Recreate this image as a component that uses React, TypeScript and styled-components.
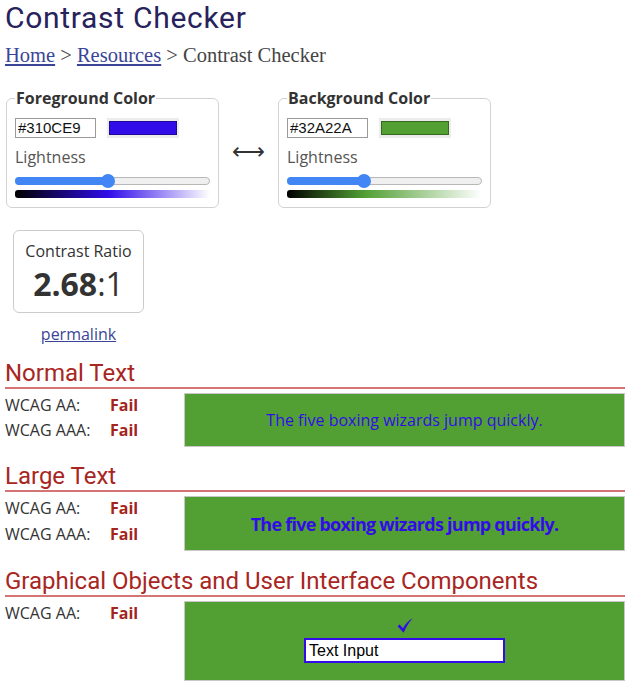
import React from 'react';
import styled, { createGlobalStyle } from 'styled-components';

const fgColor = '#310CE9';
const bgColor = '#52A034';

const GlobalStyle = createGlobalStyle`
  body {
    margin: 0;
    background: #fff;
    color: #333;
    font-family: "Open Sans", "DejaVu Sans", sans-serif;
    font-size: 16px;
  }
`;

const Page = styled.main`
  padding: 0 5px 8px;
`;

const Title = styled.h1`
  margin: 3px 0 0;
  color: #27225c;
  font-family: Roboto, sans-serif;
  font-size: 30px;
  font-weight: 400;
  letter-spacing: 0.7px;
  line-height: 1;
`;

const Crumbs = styled.nav`
  margin-top: 12px;
  color: #444;
  font-family: "Liberation Serif", serif;
  font-size: 20.5px;
  line-height: 20px;

  a {
    color: #3b4598;
  }
`;

const Pickers = styled.div`
  align-items: center;
  display: flex;
  margin-top: 23px;
  padding-left: 1px;
`;

const Picker = styled.fieldset`
  border: 1px solid #d2d2d2;
  border-radius: 6px;
  box-sizing: border-box;
  margin: 0;
  min-width: 0;
  padding: 0 8px 9px;
  width: 213px;
`;

const Legend = styled.legend`
  font-size: 16px;
  font-weight: 700;
  line-height: 21.8px;
  padding: 0 1px;
`;

const Swap = styled.div`
  font-family: "DejaVu Sans", sans-serif;
  font-size: 23px;
  padding-top: 6px;
  text-align: center;
  width: 59px;
`;

const ColorRow = styled.div`
  display: flex;
  gap: 11px;
  margin-top: 8px;
`;

const HexInput = styled.input`
  border: 1px solid #9a9a9a;
  box-sizing: border-box;
  color: #111;
  font-family: "Liberation Sans", Arial, sans-serif;
  font-size: 15px;
  height: 20px;
  margin: 0;
  padding: 0 2px;
  width: 81px;
`;

const Swatch = styled.span<{ $color: string }>`
  background: #ececec;
  box-sizing: border-box;
  display: block;
  height: 20px;
  padding: 3px 2px;
  width: 72px;

  &::after {
    background: ${({ $color }) => $color};
    border: 1px solid rgba(0, 0, 0, 0.35);
    box-sizing: border-box;
    content: '';
    display: block;
    height: 100%;
  }
`;

const Label = styled.div`
  color: #555;
  line-height: 21.8px;
  margin-top: 9px;
`;

const Track = styled.div`
  align-items: center;
  background: #efefef;
  border: 1px solid #b8b8b8;
  border-radius: 4px;
  box-sizing: border-box;
  display: flex;
  height: 8px;
  margin-top: 8px;
`;

const Fill = styled.div`
  align-self: stretch;
  background: #4285f4;
  border-radius: 4px 0 0 4px;
  margin: -1px 0 -1px -1px;
`;

const Thumb = styled.div`
  background: #4285f4;
  border-radius: 50%;
  flex: none;
  height: 14px;
  margin-left: -7px;
  width: 14px;
`;

const Ramp = styled.div<{ $color: string; $at: number }>`
  background: linear-gradient(
    to right,
    #000,
    ${({ $color }) => $color} ${({ $at }) => $at}%,
    #fff
  );
  border-radius: 3px;
  height: 8px;
  margin-top: 5px;
`;

const RatioArea = styled.div`
  align-items: center;
  display: flex;
  flex-direction: column;
  margin: 22px 0 0 8px;
  width: 131px;
`;

const RatioBox = styled.div`
  border: 1px solid #ccc;
  border-radius: 6px;
  box-sizing: border-box;
  padding: 9px 0 7px;
  text-align: center;
  width: 100%;
`;

const RatioValue = styled.div`
  font-size: 32px;

  b {
    font-weight: 700;
  }
`;

const Permalink = styled.a`
  color: #3b4598;
  margin-top: 10px;
`;

const Section = styled.section<{ $first?: boolean }>`
  margin-top: ${({ $first }) => ($first ? 16 : 17.5)}px;
`;

const SectionTitle = styled.h2`
  border-bottom: 2px solid #d47474;
  color: #a8261f;
  font-family: Roboto, sans-serif;
  font-size: 24px;
  font-weight: 400;
  line-height: 1;
  margin: 0;
  padding-bottom: 2px;
`;

const Results = styled.div`
  display: flex;
  margin-top: 4px;
`;

const Criteria = styled.dl`
  align-content: start;
  display: grid;
  grid-template-columns: 105px auto;
  line-height: 25.5px;
  margin: 0;
  width: 179px;

  dd {
    color: #a3241c;
    font-weight: 700;
    margin: 0;
  }
`;

const Sample = styled.div<{ $height: number; $large?: boolean }>`
  align-items: center;
  background: ${bgColor};
  border: 1px solid #c8c8c8;
  box-sizing: border-box;
  color: ${fgColor};
  display: flex;
  flex: 1;
  flex-direction: column;
  font-size: ${({ $large }) => ($large ? '18px' : '16px')};
  font-weight: ${({ $large }) => ($large ? 700 : 400)};
  height: ${({ $height }) => $height}px;
  justify-content: center;
  letter-spacing: ${({ $large }) => ($large ? '-0.75px' : 'normal')};
`;

const DemoInput = styled.input`
  background: #fff;
  border: 2px solid ${fgColor};
  box-sizing: border-box;
  color: #000;
  font-family: "Liberation Sans", Arial, sans-serif;
  font-size: 16px;
  height: 25px;
  margin: 5px 0 0;
  outline: none;
  padding: 0 3px;
  width: 201px;
`;

function Check() {
  return (
    <svg width="16" height="15" viewBox="0 0 16 15" aria-hidden="true">
      <path d="M0.5 8.2 L2.6 6.6 L6 10.2 Q9.6 3.6 15.8 0.3 Q11 5 6.6 14.8 Z" fill={fgColor} />
    </svg>
  );
}

interface PickerProps {
  title: string;
  hex: string;
  color: string;
  lightness: number;
}

function ColorPicker({ title, hex, color, lightness }: PickerProps) {
  return (
    <Picker>
      <Legend>{title}</Legend>
      <ColorRow>
        <HexInput defaultValue={hex} />
        <Swatch $color={color} />
      </ColorRow>
      <Label>Lightness</Label>
      <Track>
        <Fill style={{ width: `${lightness}%` }} />
        <Thumb />
      </Track>
      <Ramp $color={color} $at={lightness} />
    </Picker>
  );
}

function Criterion({ level }: { level: string }) {
  return (
    <>
      <dt>WCAG {level}:</dt>
      <dd>Fail</dd>
    </>
  );
}

const sentence = 'The five boxing wizards jump quickly.';

export default function App() {
  return (
    <Page>
      <GlobalStyle />
      <Title>Contrast Checker</Title>
      <Crumbs>
        <a href="#">Home</a> &gt; <a href="#">Resources</a> &gt; Contrast Checker
      </Crumbs>

      <Pickers>
        <ColorPicker title="Foreground Color" hex="#310CE9" color={fgColor} lightness={48} />
        <Swap>⟷</Swap>
        <ColorPicker title="Background Color" hex="#32A22A" color={bgColor} lightness={40} />
      </Pickers>

      <RatioArea>
        <RatioBox>
          <div>Contrast Ratio</div>
          <RatioValue>
            <b>2.68</b>:1
          </RatioValue>
        </RatioBox>
        <Permalink href="#">permalink</Permalink>
      </RatioArea>

      <Section $first>
        <SectionTitle>Normal Text</SectionTitle>
        <Results>
          <Criteria>
            <Criterion level="AA" />
            <Criterion level="AAA" />
          </Criteria>
          <Sample $height={54}>{sentence}</Sample>
        </Results>
      </Section>

      <Section>
        <SectionTitle>Large Text</SectionTitle>
        <Results>
          <Criteria>
            <Criterion level="AA" />
            <Criterion level="AAA" />
          </Criteria>
          <Sample $height={55} $large>
            {sentence}
          </Sample>
        </Results>
      </Section>

      <Section>
        <SectionTitle>Graphical Objects and User Interface Components</SectionTitle>
        <Results>
          <Criteria>
            <Criterion level="AA" />
          </Criteria>
          <Sample $height={80}>
            <Check />
            <DemoInput defaultValue="Text Input" />
          </Sample>
        </Results>
      </Section>
    </Page>
  );
}
